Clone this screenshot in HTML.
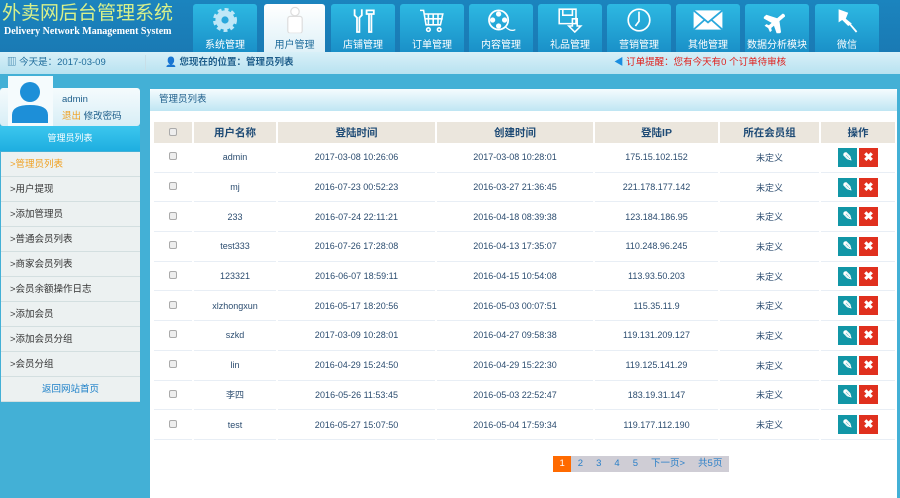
<!DOCTYPE html>
<html><head><meta charset="utf-8"><style>
*{margin:0;padding:0;box-sizing:border-box}
body{width:900px;height:498px;overflow:hidden;background:#43b0d6;font-family:"Liberation Sans","Noto Sans CJK SC",sans-serif;font-size:9px;color:#333;position:relative}
.hd{position:absolute;left:0;top:0;width:900px;height:52px;background:linear-gradient(#1b84be,#1a7ab4)}
.logo1{position:absolute;left:2px;top:4px;font-size:19px;line-height:20px;color:#d8f08a;white-space:nowrap}
.logo2{position:absolute;left:4px;top:26px;font-size:10px;line-height:11px;color:#fff;font-family:"Liberation Serif",serif;font-weight:bold;white-space:nowrap}
.tab{position:absolute;top:4px;width:64px;height:48px;background:linear-gradient(#2db8e2,#1a90c8);border-radius:3px 3px 0 0;color:#fff;text-align:center;font-size:10px}
.tab.on{background:linear-gradient(#fff,#dff1f8);color:#1d6b9a}
.tab .ic{height:32px;display:flex;align-items:center;justify-content:center}
.tab .ic svg{transform:scale(1.2)}
.tab .t{position:absolute;left:0;right:0;top:32px}
.info{position:absolute;left:0;top:52px;width:900px;height:22px;background:linear-gradient(#d8f0f8,#b8e2f0);color:#1d5d8a;font-size:9.5px;line-height:22px}
.side{position:absolute;left:0;top:74px;width:140px}
.ubox{position:absolute;left:0;top:14px;width:140px;height:38px;background:linear-gradient(#f5fbfd,#d8eef6);border-radius:3px}
.av{position:absolute;left:8px;top:2px;width:45px;height:50px;background:#f5fbfd}
.sh{position:absolute;left:0;top:52px;width:140px;height:25px;background:linear-gradient(#3cc6ee,#1eaee0);color:#fff;text-align:center;line-height:24px}
.menu{position:absolute;left:1px;top:78px;width:139px;background:#ecf1f1}
.menu div{height:25px;line-height:25px;border-bottom:1px solid #d3dfe0;padding-left:9px;font-size:9.5px}
.main{position:absolute;left:150px;top:89px;width:747px;height:409px;background:#fff}
.ttl{height:22px;background:linear-gradient(#f5fcfe,#bfe6f3);color:#1d5d8a;font-size:9.5px;line-height:22px;padding-left:9px;border-radius:3px 3px 0 0}
table{position:absolute;left:2px;top:33px;border-collapse:separate;border-spacing:2px 0;width:745px}
th{background:#ebe6dd;height:21px;color:#1d4a75;font-size:10.5px;font-weight:bold}
td{height:29.7px;text-align:center;color:#2c4d70;font-size:9px;border-bottom:1px solid #e8eef5}
.cb{display:inline-block;width:8px;height:8px;border:1px solid #aaa;border-radius:2px;background:#eee}
.bt{display:inline-block;width:19px;height:19px;vertical-align:middle;margin:0 1px;color:#fff;font-weight:bold;font-size:12px;line-height:19px}
.pg{position:absolute;left:403px;top:367px;height:16px;background:#cfcdd5;display:flex;font-size:9.5px;line-height:16px;color:#2a7fc8}
.pg span{padding:0 6.5px}
</style></head><body>
<div class="hd">
<div class="logo1">外卖网后台管理系统</div>
<div class="logo2">Delivery Network Management System</div>
<div class="tab" style="left:193px"><div class="ic"><svg width="22" height="22" viewBox="0 0 22 22"><circle cx="11" cy="11" r="8" fill="#bfe7f7" stroke="#bfe7f7" stroke-width="4" stroke-dasharray="3 2.3"/><circle cx="11" cy="11" r="3" fill="#2aa8dc"/></svg></div><div class="t">系统管理</div></div>
<div class="tab on" style="left:264px;width:61px"><div class="ic"><svg width="16" height="22" viewBox="0 0 16 22"><circle cx="8" cy="4" r="3.5" fill="#fff" stroke="#ddd"/><rect x="2" y="8" width="12" height="14" rx="2" fill="#fff" stroke="#ddd"/></svg></div><div class="t">用户管理</div></div>
<div class="tab" style="left:331px"><div class="ic"><svg width="22" height="22" viewBox="0 0 22 22" fill="none" stroke="#fff" stroke-width="1.5"><path d="M4 2v5l2 2v12h2V9l2-2V2M14 3h6v3h-6zM16 6v15h2V6"/></svg></div><div class="t">店铺管理</div></div>
<div class="tab" style="left:400px"><div class="ic"><svg width="22" height="22" viewBox="0 0 22 22" fill="none" stroke="#fff" stroke-width="1.3"><path d="M1 3h3l2 12h12l2-9H5M8 6v9M12 6v9M16 6v9M5 10h15"/><circle cx="8" cy="19" r="1.5"/><circle cx="17" cy="19" r="1.5"/></svg></div><div class="t">订单管理</div></div>
<div class="tab" style="left:469px"><div class="ic"><svg width="24" height="22" viewBox="0 0 24 22"><circle cx="10" cy="11" r="8" fill="none" stroke="#fff" stroke-width="1.5"/><circle cx="10" cy="6" r="2.2" fill="#fff"/><circle cx="10" cy="16" r="2.2" fill="#fff"/><circle cx="5" cy="11" r="2.2" fill="#fff"/><circle cx="15" cy="11" r="2.2" fill="#fff"/><path d="M16 17q4 4 8 2" stroke="#fff" fill="none"/></svg></div><div class="t">内容管理</div></div>
<div class="tab" style="left:538px"><div class="ic"><svg width="22" height="22" viewBox="0 0 22 22" fill="none" stroke="#fff" stroke-width="1.3"><path d="M2 2h14v12H2zM5 2v5h8V2M13 10v6h-3l5 5 5-5h-3v-6z"/></svg></div><div class="t">礼品管理</div></div>
<div class="tab" style="left:607px"><div class="ic"><svg width="22" height="22" viewBox="0 0 22 22" fill="none" stroke="#fff" stroke-width="1.4"><circle cx="11" cy="11" r="9"/><path d="M11 4v8l-3 4"/></svg></div><div class="t">营销管理</div></div>
<div class="tab" style="left:676px"><div class="ic"><svg width="26" height="20" viewBox="0 0 26 20"><rect x="1" y="2" width="24" height="16" fill="#fff"/><path d="M1 2l12 10 12-10M1 18l9-8M25 18l-9-8" stroke="#2aa8dc" stroke-width="1.5" fill="none"/></svg></div><div class="t">其他管理</div></div>
<div class="tab" style="left:745px"><div class="ic"><svg width="22" height="22" viewBox="0 0 22 22"><path d="M3 2l4 0 5 8h6a2 2 0 010 3h-6l-5 8H3l3-8H3l-1 2H0l1-3.5L0 8h2l1 2h3z" fill="#fff" transform="rotate(-40 11 11)"/></svg></div><div class="t">数据分析模块</div></div>
<div class="tab" style="left:815px"><div class="ic"><svg width="22" height="22" viewBox="0 0 22 22"><path d="M4 2l8 3-2 5 5 4-3 2-5-5-3 2z" fill="#fff"/><path d="M13 14l6 7" stroke="#fff" stroke-width="1.5"/></svg></div><div class="t">微信</div></div>
</div>
<div class="info">
<span style="position:absolute;left:7px;color:#1d6b9a">▥ 今天是：2017-03-09</span>
<span style="position:absolute;left:145px;top:3px;width:1px;height:16px;background:#c8dfe8"></span>
<span style="position:absolute;left:165px;font-weight:bold">👤 您现在的位置：管理员列表</span>
<span style="position:absolute;left:614px;color:#e0201c"><span style="color:#1a8ee0">◀</span> 订单提醒：您有今天有0 个订单待审核</span>
</div>
<div class="side">
<div class="ubox"></div>
<div class="av"><svg width="45" height="50" viewBox="0 0 45 50"><circle cx="22" cy="16" r="10" fill="#1d8fd8"/><path d="M4 47v-8q0-10 18-10 18 0 18 10v8z" fill="#1d8fd8"/></svg></div>
<div style="position:absolute;left:62px;top:20px;color:#1d5d8a;font-size:9.5px">admin</div>
<div style="position:absolute;left:62px;top:34px;font-size:9.5px"><span style="color:#f0a020">退出</span> <span style="color:#1d5d8a">修改密码</span></div>
<div class="sh">管理员列表</div>
<div class="menu">
<div style="color:#f0a020">&gt;管理员列表</div><div>&gt;用户提现</div><div>&gt;添加管理员</div><div>&gt;普通会员列表</div><div>&gt;商家会员列表</div><div>&gt;会员余额操作日志</div><div>&gt;添加会员</div><div>&gt;添加会员分组</div><div>&gt;会员分组</div>
<div style="text-align:center;padding:0;color:#1a7fc8">返回网站首页</div>
</div>
</div>
<div class="main">
<div class="ttl">管理员列表</div>
<table>
<tr><th style="width:38px"><span class="cb"></span></th><th style="width:82px">用户名称</th><th style="width:157px">登陆时间</th><th style="width:156px">创建时间</th><th style="width:123px">登陆IP</th><th style="width:99px">所在会员组</th><th>操作</th></tr>
<tr><td><span class="cb"></span></td><td>admin</td><td>2017-03-08 10:26:06</td><td>2017-03-08 10:28:01</td><td>175.15.102.152</td><td>未定义</td><td><span class="bt" style="background:#1196a6">✎</span><span class="bt" style="background:#e0301e">✖</span></td></tr>
<tr><td><span class="cb"></span></td><td>mj</td><td>2016-07-23 00:52:23</td><td>2016-03-27 21:36:45</td><td>221.178.177.142</td><td>未定义</td><td><span class="bt" style="background:#1196a6">✎</span><span class="bt" style="background:#e0301e">✖</span></td></tr>
<tr><td><span class="cb"></span></td><td>233</td><td>2016-07-24 22:11:21</td><td>2016-04-18 08:39:38</td><td>123.184.186.95</td><td>未定义</td><td><span class="bt" style="background:#1196a6">✎</span><span class="bt" style="background:#e0301e">✖</span></td></tr>
<tr><td><span class="cb"></span></td><td>test333</td><td>2016-07-26 17:28:08</td><td>2016-04-13 17:35:07</td><td>110.248.96.245</td><td>未定义</td><td><span class="bt" style="background:#1196a6">✎</span><span class="bt" style="background:#e0301e">✖</span></td></tr>
<tr><td><span class="cb"></span></td><td>123321</td><td>2016-06-07 18:59:11</td><td>2016-04-15 10:54:08</td><td>113.93.50.203</td><td>未定义</td><td><span class="bt" style="background:#1196a6">✎</span><span class="bt" style="background:#e0301e">✖</span></td></tr>
<tr><td><span class="cb"></span></td><td>xlzhongxun</td><td>2016-05-17 18:20:56</td><td>2016-05-03 00:07:51</td><td>115.35.11.9</td><td>未定义</td><td><span class="bt" style="background:#1196a6">✎</span><span class="bt" style="background:#e0301e">✖</span></td></tr>
<tr><td><span class="cb"></span></td><td>szkd</td><td>2017-03-09 10:28:01</td><td>2016-04-27 09:58:38</td><td>119.131.209.127</td><td>未定义</td><td><span class="bt" style="background:#1196a6">✎</span><span class="bt" style="background:#e0301e">✖</span></td></tr>
<tr><td><span class="cb"></span></td><td>lin</td><td>2016-04-29 15:24:50</td><td>2016-04-29 15:22:30</td><td>119.125.141.29</td><td>未定义</td><td><span class="bt" style="background:#1196a6">✎</span><span class="bt" style="background:#e0301e">✖</span></td></tr>
<tr><td><span class="cb"></span></td><td>李四</td><td>2016-05-26 11:53:45</td><td>2016-05-03 22:52:47</td><td>183.19.31.147</td><td>未定义</td><td><span class="bt" style="background:#1196a6">✎</span><span class="bt" style="background:#e0301e">✖</span></td></tr>
<tr><td><span class="cb"></span></td><td>test</td><td>2016-05-27 15:07:50</td><td>2016-05-04 17:59:34</td><td>119.177.112.190</td><td>未定义</td><td><span class="bt" style="background:#1196a6">✎</span><span class="bt" style="background:#e0301e">✖</span></td></tr>
</table>
<div class="pg"><span style="background:#ff6a00;color:#fff">1</span><span>2</span><span>3</span><span>4</span><span>5</span><span>下一页&gt;</span><span>共5页</span></div>
</div>
</body></html>
